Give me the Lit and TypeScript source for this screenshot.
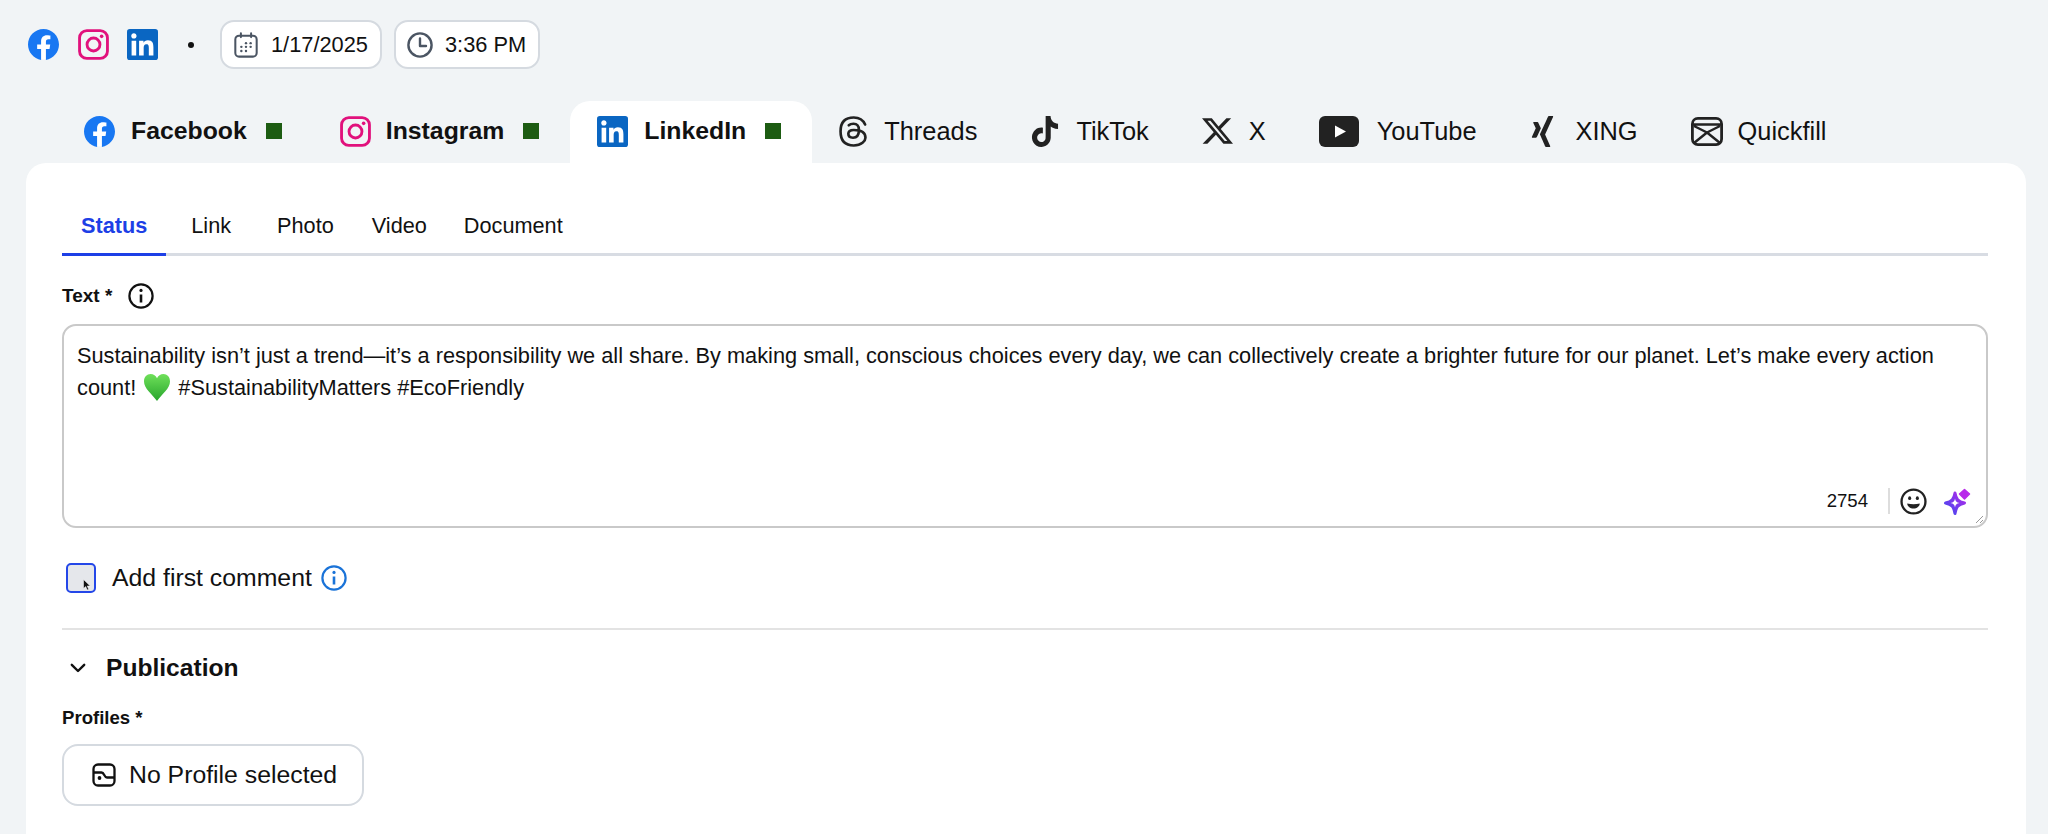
import { LitElement, html, css } from "lit";
import { customElement } from "lit/decorators.js";

const fb = html`<svg viewBox="0 0 24 24"><circle cx="12" cy="12" r="11.6" fill="#fff"/><path fill="#1877f2" d="M24 12.073c0-6.627-5.373-12-12-12s-12 5.373-12 12c0 5.99 4.388 10.954 10.125 11.854v-8.385H7.078v-3.47h3.047V9.43c0-3.007 1.792-4.669 4.533-4.669 1.312 0 2.686.235 2.686.235v2.953H15.83c-1.491 0-1.956.925-1.956 1.874v2.25h3.328l-.532 3.47h-2.796v8.385C19.612 23.027 24 18.062 24 12.073z"/></svg>`;
const ig = html`<svg viewBox="0 0 24 24" fill="none" stroke="#e1117c"><rect x="1.2" y="1.2" width="21.6" height="21.6" rx="5.6" stroke-width="2.2"/><circle cx="12" cy="12" r="5" stroke-width="2.2"/><circle cx="18.3" cy="5.7" r="1.4" fill="#e1117c" stroke="none"/></svg>`;
const li = html`<svg viewBox="0 0 24 24"><rect width="24" height="24" rx="2.2" fill="#0a66c2"/><path fill="#fff" d="M20.447 20.452h-3.554v-5.569c0-1.328-.027-3.037-1.852-3.037-1.853 0-2.136 1.445-2.136 2.939v5.667H9.351V9h3.414v1.561h.046c.477-.9 1.637-1.85 3.37-1.85 3.601 0 4.267 2.37 4.267 5.455v6.286zM5.337 7.433c-1.144 0-2.063-.926-2.063-2.065 0-1.138.92-2.063 2.063-2.063 1.14 0 2.064.925 2.064 2.063 0 1.139-.925 2.065-2.064 2.065zm1.782 13.019H3.555V9h3.564v11.452z"/></svg>`;
const threads = html`<svg viewBox="3 2 18 20" preserveAspectRatio="none" fill="none" stroke="#222" stroke-width="1.7" stroke-linecap="round" stroke-linejoin="round"><path d="M19.800 7.500c-1.333 -3 -3.967 -4.500 -7.300 -4.500c-5.500 0 -8.500 2.500 -8.500 9s3.500 9 8.500 9s7.500 -3 7.500 -5s-1 -5 -7.500 -5c-2.500 0 -3.500 1.250 -3.500 2.500c0 1.500 1 2.500 3 2.500c2.500 0 3.800 -1.500 3.800 -5s-2 -4 -3.500 -4s-2.300 .333 -3 1"/></svg>`;
const tiktok = html`<svg viewBox="0 0 24 24" preserveAspectRatio="none"><path fill="#222" d="M12.525.02c1.31-.02 2.61-.01 3.91-.02.08 1.53.63 3.09 1.75 4.17 1.12 1.11 2.7 1.62 4.24 1.79v4.03c-1.44-.05-2.89-.35-4.2-.97-.57-.26-1.1-.59-1.62-.93-.01 2.92.01 5.84-.02 8.75-.08 1.4-.54 2.79-1.35 3.94-1.31 1.92-3.58 3.17-5.91 3.21-1.43.08-2.86-.31-4.08-1.03-2.02-1.19-3.44-3.37-3.65-5.71-.02-.5-.03-1-.01-1.49.18-1.9 1.12-3.72 2.58-4.96 1.66-1.44 3.98-2.13 6.15-1.72.02 1.48-.04 2.96-.04 4.44-.99-.32-2.15-.23-3.02.37-.63.41-1.11 1.04-1.36 1.75-.21.51-.15 1.07-.14 1.61.24 1.64 1.82 3.02 3.5 2.87 1.12-.01 2.19-.66 2.77-1.61.19-.33.4-.67.41-1.06.1-1.79.06-3.57.07-5.36.01-4.03-.01-8.05.02-12.07z"/></svg>`;
const xIcon = html`<svg viewBox="0 0 24 24" preserveAspectRatio="none"><path fill="#222" d="M18.901 1.153h3.68l-8.04 9.19L24 22.846h-7.406l-5.8-7.584-6.638 7.584H.474l8.6-9.83L0 1.154h7.594l5.243 6.932ZM17.61 20.644h2.039L6.486 3.24H4.298Z"/></svg>`;
const yt = html`<svg viewBox="0 0 40 31"><rect width="40" height="31" rx="6" fill="#222"/><path fill="#fff" d="M16 9.500l11 6-11 6z"/></svg>`;
const xing = html`<svg viewBox="0 0 24 24" preserveAspectRatio="none"><path fill="#222" d="M18.188 0c-.517 0-.741.325-.927.66 0 0-7.455 13.224-7.702 13.657.015.024 4.919 9.023 4.919 9.023.17.308.436.66.967.66h3.454c.211 0 .375-.078.463-.22.089-.151.089-.346-.009-.536l-4.879-8.916c-.004-.006-.004-.016 0-.022L22.139.756c.095-.191.097-.387.006-.535C22.056.078 21.894 0 21.686 0h-3.498zM3.648 4.74c-.211 0-.385.074-.473.216-.09.149-.078.339.02.531l2.34 4.05c.004.01.004.016 0 .021L1.86 16.051c-.099.188-.093.381 0 .529.085.142.239.234.45.234h3.461c.518 0 .766-.348.945-.667l3.734-6.609-2.378-4.155c-.172-.315-.434-.659-.962-.659H3.648v.016z"/></svg>`;
const quick = html`<svg viewBox="0 0 32 29" fill="none" stroke="#222" stroke-width="2.800" stroke-linejoin="round"><rect x="1.400" y="1.400" width="29.200" height="26.200" rx="5.500"/><path d="M1.500 7.500h29M3 9l13 6.500L29 9M3 26l13-10.500L29 26" stroke-width="2.400"/></svg>`;

const calendar = html`<svg viewBox="0 0 26 28" fill="none" stroke="#4b5563" stroke-width="2.2" stroke-linecap="round"><rect x="1.500" y="4" width="23" height="22.500" rx="4"/><path d="M7.500 1.500v4M18.500 1.500v4"/><g fill="#4b5563" stroke="none"><circle cx="13" cy="12" r="1.300"/><circle cx="18" cy="12" r="1.300"/><circle cx="8" cy="16" r="1.300"/><circle cx="13" cy="16" r="1.300"/><circle cx="18" cy="16" r="1.300"/><circle cx="8" cy="20.500" r="1.300"/><circle cx="13" cy="20.500" r="1.300"/></g></svg>`;
const clock = html`<svg viewBox="0 0 26 26" fill="none" stroke="#4b5563" stroke-width="2.400" stroke-linecap="round" stroke-linejoin="round"><circle cx="13" cy="13" r="11.600"/><path d="M13 6.500V14h6"/></svg>`;
const info = (c: string) => html`<svg viewBox="0 0 26 26" fill="none" stroke=${c} stroke-width="2.200"><circle cx="13" cy="13" r="11.600"/><path d="M13 11.500v8" stroke-width="2.600"/><circle cx="13" cy="7.400" r="1.600" fill=${c} stroke="none"/></svg>`;
const heart = html`<svg class="heart" viewBox="0 0 28 28"><defs><linearGradient id="hg" x1="0" y1="0" x2="0" y2="1"><stop offset="0" stop-color="#6fe05a"/><stop offset="1" stop-color="#27a52c"/></linearGradient></defs><path fill="url(#hg)" d="M14 28C9 21 1 15.500 1 8.500 1 3.800 4 1 7.500 1 10.500 1 13 2.800 14 5.300 15 2.800 17.500 1 20.500 1 24 1 27 3.800 27 8.500 27 15.500 19 21 14 28z"/></svg>`;
const smile = html`<svg viewBox="0 0 28 28" fill="none" stroke="#222" stroke-width="2.400"><circle cx="14" cy="14" r="12.400"/><ellipse cx="10" cy="10.500" rx="1.600" ry="2" fill="#222" stroke="none"/><ellipse cx="18" cy="10.500" rx="1.600" ry="2" fill="#222" stroke="none"/><path d="M7.500 16c4 1 9 1 13 0 0 3-3 5.200-6.500 5.200S7.500 19 7.500 16z" fill="#222" stroke="none"/></svg>`;
const sparkle = html`<svg viewBox="0 0 28 27"><defs><linearGradient id="sg" gradientUnits="userSpaceOnUse" x1="1" y1="26" x2="24" y2="3"><stop offset="0" stop-color="#3b4bf0"/><stop offset="1" stop-color="#c026e8"/></linearGradient></defs><path fill="url(#sg)" stroke="url(#sg)" stroke-width="3" stroke-linejoin="round" d="M12 5C13 11 15 13.500 21.500 15 15 16.500 13 19 12 25.500 11 19 9 16.500 2.500 15 9 13.500 11 11 12 5z"/><path fill="#fff" d="M12 10.500C12.400 13 13.400 14.400 16.500 15 13.400 15.600 12.400 17 12 19.500 11.600 17 10.600 15.600 7.500 15 10.600 14.400 11.600 13 12 10.500z"/><path fill="#b82aea" stroke="#b82aea" stroke-width="1.500" stroke-linejoin="round" d="M21.500 1.500L26.500 6l-5 5-5-5z"/></svg>`;
const profile = html`<svg viewBox="0 0 24 24" fill="none" stroke="#111" stroke-width="2.300" stroke-linejoin="round"><rect x="1.500" y="1.500" width="21" height="21" rx="4.500"/><path d="M2 9.500h7.500c3 0 2.500 5 5.500 5h7.500"/><circle cx="7.500" cy="15" r="1.900" fill="#111" stroke="none"/></svg>`;
const chevron = html`<svg viewBox="0 0 16 10" fill="none" stroke="#111" stroke-width="2.400" stroke-linecap="round" stroke-linejoin="round"><path d="M1.800 1.800L8 8l6.200-6.200"/></svg>`;
const cursor = html`<svg viewBox="0 0 8 12"><path fill="#111" stroke="#fff" stroke-width=".5" d="M.5.500v9l2.200-2 1.500 3.500 1.500-.7L4.200 7h3z"/></svg>`;

const TABS = [
  { label: "Facebook", icon: fb, w: 31, h: 31, gap: 16, bold: true, dot: true },
  { label: "Instagram", icon: ig, w: 31, h: 31, gap: 15, bold: true, dot: true },
  { label: "LinkedIn", icon: li, w: 31, h: 31, gap: 16, bold: true, dot: true, active: true },
  { label: "Threads", icon: threads, w: 28, h: 31, gap: 17 },
  { label: "TikTok", icon: tiktok, w: 30, h: 31, gap: 16 },
  { label: "X", icon: xIcon, w: 31, h: 28, gap: 16 },
  { label: "YouTube", icon: yt, w: 40, h: 31, gap: 18 },
  { label: "XING", icon: xing, w: 25, h: 31, gap: 21 },
  { label: "Quickfill", icon: quick, w: 32, h: 29, gap: 15 },
];

@customElement("app-root")
export class AppRoot extends LitElement {
  static styles = css`
    :host { display: block; height: 834px; overflow: hidden; background: #f1f4f6; font-family: "Liberation Sans", Arial, sans-serif; color: #111; }
    svg { display: block; flex: none; }
    .top { display: flex; align-items: center; height: 89px; padding: 0 0 0 28px; box-sizing: border-box; }
    .soc { width: 31px; height: 31px; margin-right: 19px; display: block; }
    .soc svg { width: 31px; height: 31px; }
    .soc:nth-child(2) { margin-right: 18px; }
    .soc:nth-child(3) { margin-right: 0; }
    .dot { width: 6px; height: 6px; border-radius: 50%; background: #111; margin: 0 26px 0 30px; }
    .pill { display: flex; align-items: center; height: 49px; box-sizing: border-box; background: #fff; border: 2px solid #d5dae0; border-radius: 14px; padding: 0 12px 0 11px; font-size: 21.8px; margin-right: 12px; }
    .pill svg { width: 26px; height: 26px; margin-right: 12px; }
    .tabs { display: flex; height: 74px; padding: 12px 0 0 57px; box-sizing: border-box; }
    .tab { display: flex; align-items: center; padding: 0 26px 2px 27px; border-radius: 20px 20px 0 0; font-size: 25.4px; }
    .tab.has-dot { padding-right: 31px; }
    .tab.active { background: #fff; }
    .tab .ic svg { width: 100%; height: 100%; }
    .tab.bold { font-weight: 700; font-size: 24.8px; }
    .sq { width: 16px; height: 16px; background: #1d5c12; margin-left: 19px; }
    .card { background: #fff; border-radius: 20px 20px 0 0; margin: 0 22px 0 26px; height: 671px; padding: 0 38px 0 36px; box-sizing: border-box; }
    .subtabs { display: flex; height: 93px; align-items: flex-start; border-bottom: 3px solid #d8dce3; padding-top: 40px; box-sizing: border-box; }
    .st { padding: 0 19px 8px; font-size: 21.7px; display: flex; align-items: center; height: 53px; box-sizing: border-box; }
    .st.m1 { margin-left: 6px; }
    .st.m2 { margin-left: 8px; }
    .st.m3 { margin-left: -1px; }
    .st.on { color: #1d3fe6; font-weight: 700; border-bottom: 3px solid #1d3fe6; padding-bottom: 5px; }
    .label { font-weight: 700; font-size: 19px; display: flex; align-items: center; }
    .label svg { width: 26px; height: 26px; margin-left: 16px; }
    .lbl1 { margin-top: 27px; height: 26px; }
    .ta { margin-top: 15px; height: 204px; box-sizing: border-box; border: 2px solid #c9c9c9; border-radius: 14px; padding: 14px 13px; font-size: 21.75px; line-height: 32px; position: relative; }
    .heart { display: inline-block; width: 28px; height: 28px; vertical-align: -6px; margin: 0 1px; }
    .ta-foot { position: absolute; right: 0; bottom: 0; display: flex; align-items: center; height: 50px; padding-right: 15px; font-size: 18.6px; }
    .ta-foot .cnt { margin-right: 20px; }
    .ta-foot .sep { width: 2px; height: 26px; background: #ddd; margin-right: 10px; }
    .ta-foot .sm { width: 27px; height: 27px; margin-right: 16px; }
    .ta-foot .sp { width: 28px; height: 27px; }
    .grip { position: absolute; right: 2px; bottom: 2px; width: 9px; height: 9px; }
    .cm { display: flex; align-items: center; margin-top: 35px; height: 30px; font-size: 24.8px; }
    .cb { width: 30px; height: 30px; box-sizing: border-box; border: 2px solid #2447e8; border-radius: 5px; background: #e5e7eb; margin: 0 16px 0 4px; position: relative; }
    .cb svg { position: absolute; left: 15px; top: 14px; width: 8px; height: 12px; }
    .cm .i { width: 26px; height: 26px; margin-left: 9px; }
    .hr { height: 2px; background: #e3e3e3; margin-top: 35px; }
    .sec { display: flex; align-items: center; margin-top: 25px; height: 26px; font-size: 24.6px; font-weight: 700; }
    .sec svg { width: 16px; height: 10px; margin: 0 20px 0 8px; }
    .lbl2 { margin-top: 25px; height: 24px; font-size: 18.6px; }
    .btn { display: inline-flex; align-items: center; margin-top: 14px; height: 62px; box-sizing: border-box; border: 2px solid #d5dae0; border-radius: 16px; padding: 0 25px 0 28px; font-size: 24.8px; }
    .btn svg { width: 24px; height: 24px; margin-right: 13px; }
  `;

  render() {
    return html`
      <div class="top">
        <span class="soc">${fb}</span><span class="soc">${ig}</span><span class="soc">${li}</span>
        <span class="dot"></span>
        <div class="pill">${calendar}<span>1/17/2025</span></div>
        <div class="pill">${clock}<span>3:36 PM</span></div>
      </div>
      <div class="tabs">
        ${TABS.map((t) => html`
          <div class="tab ${t.active ? "active" : ""} ${t.bold ? "bold" : ""} ${t.dot ? "has-dot" : ""}">
            <span class="ic" style="width:${t.w}px;height:${t.h}px;margin-right:${t.gap}px">${t.icon}</span>
            <span>${t.label}</span>
            ${t.dot ? html`<span class="sq"></span>` : ""}
          </div>`)}
      </div>
      <div class="card">
        <div class="subtabs">
          <div class="st on">Status</div>
          <div class="st m1">Link</div>
          <div class="st m2">Photo</div>
          <div class="st">Video</div>
          <div class="st m3">Document</div>
        </div>
        <div class="label lbl1">Text *${info("#111")}</div>
        <div class="ta">
          Sustainability isn’t just a trend—it’s a responsibility we all share. By making small, conscious choices every day, we can collectively create a brighter future for our planet. Let’s make every action count! ${heart} #SustainabilityMatters #EcoFriendly
          <div class="ta-foot">
            <span class="cnt">2754</span><span class="sep"></span>
            <span class="sm">${smile}</span><span class="sp">${sparkle}</span>
          </div>
          <svg class="grip" viewBox="0 0 9 9" stroke="#999" stroke-width="1"><path d="M1 8l7-7M5 8l3-3"/></svg>
        </div>
        <div class="cm">
          <div class="cb">${cursor}</div>
          <span>Add first comment</span>
          <span class="i">${info("#1a73d8")}</span>
        </div>
        <div class="hr"></div>
        <div class="sec">${chevron}<span>Publication</span></div>
        <div class="label lbl2">Profiles *</div>
        <div class="btn">${profile}<span>No Profile selected</span></div>
      </div>
    `;
  }
}
